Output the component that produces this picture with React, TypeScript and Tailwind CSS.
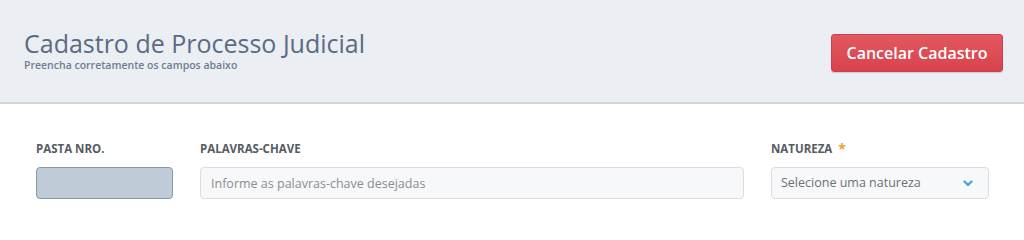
import React from 'react';

const App = () => {
  return (
    <div className="w-[1024px] h-[224px] bg-white overflow-hidden font-['Open_Sans',sans-serif]">
      {/* Header */}
      <header className="h-[104px] bg-[#ebeef3] border-b-2 border-[#cdd6de] flex items-start justify-between pl-6 pr-[21px]">
        <div className="pt-[28px]">
          <h1 className="text-[25px] leading-[30px] text-[#5b6b84] font-normal">
            Cadastro de Processo Judicial
          </h1>
          <p className="text-[10.5px] leading-[12px] font-semibold text-[#6f7d93] mt-[1px]">
            Preencha corretamente os campos abaixo
          </p>
        </div>
        <button className="mt-[34px] w-[172px] h-[38px] rounded-[3px] bg-gradient-to-b from-[#e35760] to-[#d8434c] border border-[#cf3f48] text-white text-[16px] font-semibold shadow-[0_1px_1px_rgba(0,0,0,0.15)]">
          Cancelar Cadastro
        </button>
      </header>

      {/* Form */}
      <div className="flex gap-[27px] pl-9 pt-[38px]">
        <div className="w-[137px] flex flex-col">
          <label className="text-[11.5px] leading-[14px] font-bold text-[#555b63] mb-[11px]">PASTA NRO.</label>
          <div className="h-[32px] rounded-[4px] bg-[#bfccd7] border border-[#8899a8]" />
        </div>
        <div className="w-[544px] flex flex-col">
          <label className="text-[11.5px] leading-[14px] font-bold text-[#555b63] mb-[11px]">PALAVRAS-CHAVE</label>
          <input
            className="h-[32px] rounded-[4px] bg-[#f7f8f9] border border-[#d9dde1] px-[10px] text-[12.5px] text-[#555] placeholder:text-[#8a8d90] outline-none"
            placeholder="Informe as palavras-chave desejadas"
          />
        </div>
        <div className="w-[218px] flex flex-col">
          <label className="text-[11.5px] leading-[14px] font-bold text-[#555b63] mb-[11px] flex items-center gap-[6px]">
            NATUREZA <span className="text-[#f0a030] text-[14px] leading-[10px]">*</span>
          </label>
          <div className="h-[32px] rounded-[4px] bg-[#f7f8f9] border border-[#d9dde1] pl-[9px] pr-[15px] flex items-center justify-between">
            <span className="text-[12.5px] text-[#6c7075]">Selecione uma natureza</span>
            <svg width="10" height="7" viewBox="0 0 10 7">
              <path d="M1.5 1.5 L5 5 L8.5 1.5" stroke="#41a9cf" strokeWidth="2.2" fill="none" strokeLinecap="round" strokeLinejoin="round" />
            </svg>
          </div>
        </div>
      </div>
    </div>
  );
};

export default App;
